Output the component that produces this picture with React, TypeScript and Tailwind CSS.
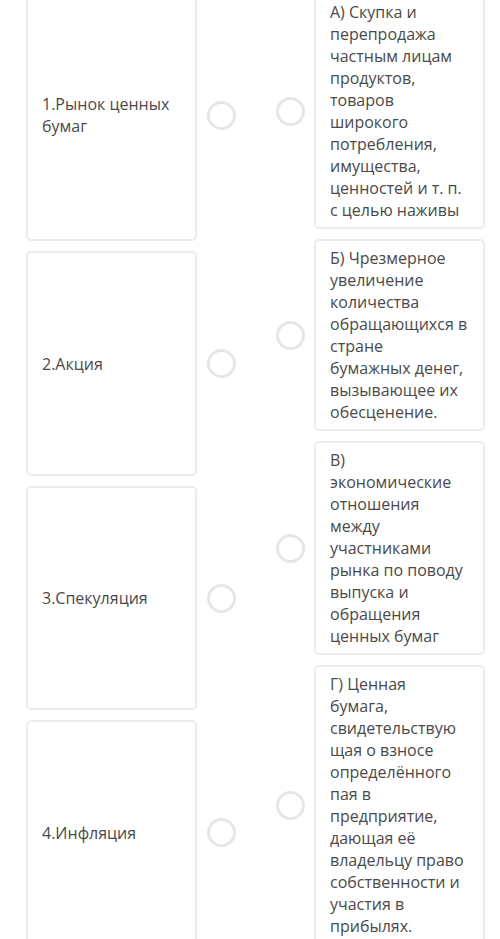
import React from "react";

const font = { fontFamily: '"Open Sans", "Noto Sans", sans-serif' };

function Circle() {
  return <div className="w-[29px] h-[29px] rounded-full border-[3px] border-[#e6e6e6] bg-white" />;
}

const left: { lines: string[]; h: string }[] = [
  { lines: ["1.Рынок ценных", "бумаг"], h: "h-[252px]" },
  { lines: ["2.Акция"], h: "h-[225px]" },
  { lines: ["3.Спекуляция"], h: "h-[224px]" },
  { lines: ["4.Инфляция"], h: "h-[225px]" },
];

const right: string[][] = [
  [
    "А) Скупка и",
    "перепродажа",
    "частным лицам",
    "продуктов,",
    "товаров",
    "широкого",
    "потребления,",
    "имущества,",
    "ценностей и т. п.",
    "с целью наживы",
  ],
  [
    "Б) Чрезмерное",
    "увеличение",
    "количества",
    "обращающихся в",
    "стране",
    "бумажных денег,",
    "вызывающее их",
    "обесценение.",
  ],
  [
    "В)",
    "экономические",
    "отношения",
    "между",
    "участниками",
    "рынка по поводу",
    "выпуска и",
    "обращения",
    "ценных бумаг",
  ],
  [
    "Г) Ценная",
    "бумага,",
    "свидетельствую",
    "щая о взносе",
    "определённого",
    "пая в",
    "предприятие,",
    "дающая её",
    "владельцу право",
    "собственности и",
    "участия в",
    "прибылях.",
  ],
];

export default function App() {
  return (
    <div className="w-[500px] h-[939px] overflow-hidden bg-white text-[16px] leading-[22px] text-[#4a4a4a]" style={font}>
      <div className="flex pl-[26px] gap-[21px]">
        <div className="flex flex-col gap-[10px] mt-[-11px] w-[219px]">
          {left.map((c, i) => (
            <div key={i} className="flex items-center">
              <div className={`w-[171px] ${c.h} shrink-0 bg-white border-2 border-[#ececec] rounded-[5px] flex flex-col justify-center px-[14px]`}>
                {c.lines.map((l, j) => (
                  <div key={j} className="whitespace-nowrap">{l}</div>
                ))}
              </div>
              <div className="w-[48px] flex justify-center">
                <Circle />
              </div>
            </div>
          ))}
        </div>
        <div className="flex flex-col gap-[10px] mt-[-7px] w-[219px]">
          {right.map((lines, i) => (
            <div key={i} className="flex items-center">
              <div className="w-[48px] flex justify-center">
                <Circle />
              </div>
              <div className="w-[171px] shrink-0 bg-white border-2 border-[#ececec] rounded-[5px] px-[14px] py-[6px]">
                {lines.map((l, j) => (
                  <div key={j} className="whitespace-nowrap">{l}</div>
                ))}
              </div>
            </div>
          ))}
        </div>
      </div>
    </div>
  );
}
